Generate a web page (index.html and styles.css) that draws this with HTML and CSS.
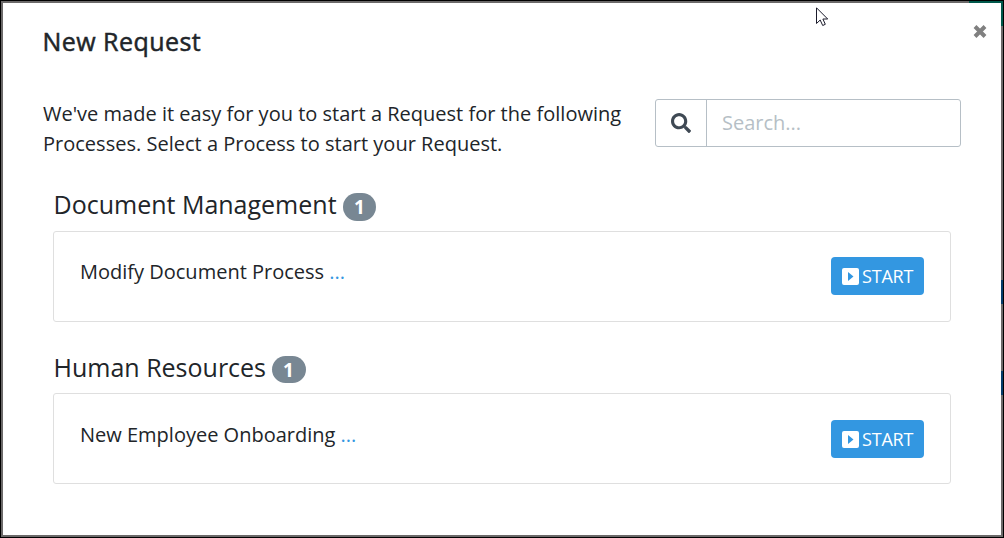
FILE: index.html
```html
<!DOCTYPE html>
<html lang="en">
<head>
<meta charset="utf-8">
<title>New Request</title>
<link rel="stylesheet" href="styles.css">
</head>
<body>
<div class="backdrop">
  <i class="peek peek-nav"></i><i class="peek peek-side"></i><i class="peek peek-btn1"></i><i class="peek peek-btn2"></i>
  <main class="modal">
    <header class="modal-header">
      <h1 class="modal-title">New Request</h1>
      <button class="close" aria-label="Close"><svg width="14" height="14" viewBox="0 0 14 14"><path d="M2 2.500L12 12.500M12 2.500L2 12.500" stroke="#808080" stroke-width="4"/></svg></button>
    </header>
    <div class="intro">
      <p class="intro-text">We've made it easy for you to start a Request for the following<br>Processes. Select a Process to start your Request.</p>
      <div class="search">
        <span class="search-icon"><svg width="20" height="20" viewBox="0 0 512 512"><path fill="#3f4954" d="M505 442.700L405.300 343c-4.500-4.500-10.600-7-17-7H372c27.600-35.300 44-79.700 44-128C416 93.100 322.900 0 208 0S0 93.100 0 208s93.100 208 208 208c48.300 0 92.700-16.400 128-44v16.300c0 6.400 2.500 12.500 7 17l99.700 99.700c9.400 9.400 24.600 9.400 33.900 0l28.300-28.300c9.400-9.400 9.400-24.600.1-34zM208 336c-70.700 0-128-57.200-128-128 0-70.700 57.200-128 128-128 70.700 0 128 57.200 128 128 0 70.700-57.200 128-128 128z"/></svg></span>
        <input class="search-input" type="text" placeholder="Search...">
      </div>
    </div>
    <section class="category">
      <h2 class="category-title"><span class="category-name">Document Management</span><span class="badge">1</span></h2>
      <div class="card">
        <p class="process">Modify Document Process <a class="more">...</a></p>
        <button class="start"><svg width="17" height="17" viewBox="0 0 17 17"><path fill="#fff" fill-rule="evenodd" d="M2 0H15Q17 0 17 2V15Q17 17 15 17H2Q0 17 0 15V2Q0 0 2 0ZM6 4V13L11.500 8.500Z"/></svg><span class="start-label">START</span></button>
      </div>
    </section>
    <section class="category category-people">
      <h2 class="category-title"><span class="category-name">Human Resources</span><span class="badge">1</span></h2>
      <div class="card">
        <p class="process">New Employee Onboarding <a class="more">...</a></p>
        <button class="start"><svg width="17" height="17" viewBox="0 0 17 17"><path fill="#fff" fill-rule="evenodd" d="M2 0H15Q17 0 17 2V15Q17 17 15 17H2Q0 17 0 15V2Q0 0 2 0ZM6 4V13L11.500 8.500Z"/></svg><span class="start-label">START</span></button>
      </div>
    </section>
  </main>
  <svg class="cursor" width="13" height="20" viewBox="0 0 13 20"><path d="M.5 .8V16.500L4.200 13L6.700 18.500L9.300 17.300L6.900 12H11.700Z" fill="#fff" stroke="#1b1b2b" stroke-width="1"/></svg>
</div>
</body>
</html>
```
FILE: styles.css
```css
* { box-sizing: border-box; }
body { margin: 0; font-family: "Open Sans", "Noto Sans", sans-serif; color: #212529; }
h1, h2, p { margin: 0; font-weight: 400; }
button { font: inherit; border: 0; padding: 0; background: none; }
svg { display: block; }

.backdrop { position: relative; width: 1004px; height: 538px; border: 1px solid #000; padding: 2px; background: #6b6969; }
.peek { position: absolute; }
.peek-nav { left: 968px; top: 0; width: 34px; height: 2px; background: #00584b; }
.peek-side { left: 1000px; top: 0; width: 2px; height: 25px; background: #00584b; }
.peek-btn1 { left: 1000px; top: 279px; width: 2px; height: 24px; background: #063c6b; }
.peek-btn2 { left: 1000px; top: 370px; width: 2px; height: 24px; background: #063c6b; }

.modal { position: relative; height: 532px; padding: 0 40px; background: #fff; }
.modal-header { display: flex; justify-content: space-between; height: 96px; padding-top: 21px; }
.modal-title { margin: -1px 0 0 -.5px; font-size: 25px; line-height: 36px; letter-spacing: .45px; -webkit-text-stroke: .5px #212529; white-space: nowrap; }
.close { width: 14px; height: 14px; margin: 0 -26px 0 0; }

.intro { display: flex; justify-content: space-between; height: 89px; }
.intro-text { font-size: 20px; line-height: 30px; letter-spacing: .01px; white-space: nowrap; }
.search { display: flex; width: 306px; height: 48px; border: 1px solid #b6bfc6; border-radius: 3px; }
.search-icon { display: flex; align-items: center; justify-content: center; width: 51px; border-right: 1px solid #b6bfc6; }
.search-input { flex: 1; min-width: 0; border: 0; padding: 0 15px 2px; background: none; outline: 0; font: 20px "Open Sans", sans-serif; }
.search-input::placeholder { color: #b6bfc6; opacity: 1; }

.category { height: 162px; padding: 0 10px; }
.category-title { display: flex; align-items: flex-start; height: 43px; font-size: 25px; line-height: 34px; white-space: nowrap; }
.category-name { margin: -1px 0 0 .5px; }
.category-people .category-name { margin-top: 0; }
.badge { width: 33px; height: 28px; margin: 5px 0 0 6.500px; border-radius: 14px; background: #788793; color: #fff; font-size: 19px; font-weight: 700; line-height: 28px; text-align: center; }
.category-people .badge { width: 34px; height: 27px; margin: 6px 0 0 5.500px; line-height: 28px; }
.card { display: flex; justify-content: space-between; width: 898px; height: 91px; padding: 25px 26px; border: 1px solid #dfdfdf; border-radius: 3px; }
.category-people .card { padding-top: 26px; }
.process { font-size: 20px; line-height: 30px; white-space: nowrap; }
.more { color: #3397e1; }
.start { display: flex; align-items: center; gap: 3px; width: 93px; height: 38px; padding-left: 11px; border-radius: 4px; background: #3397e1; color: #fff; font-size: 18px; }
.start-label { letter-spacing: -.2px; }

.cursor { position: absolute; left: 815px; top: 6px; }
```
